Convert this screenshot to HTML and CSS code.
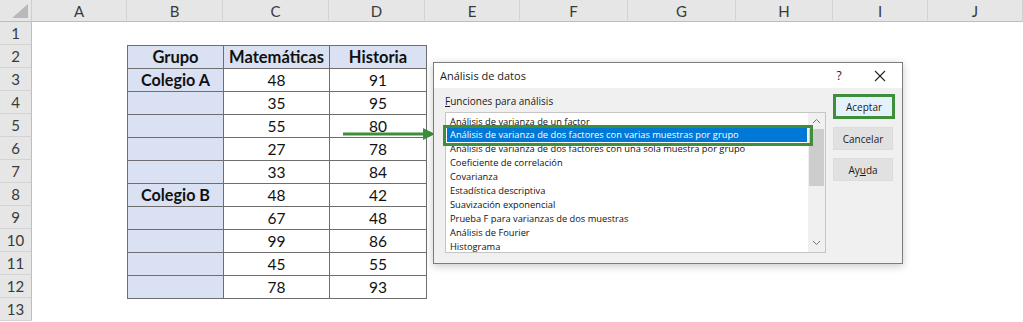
FILE: index.html
```html
<!DOCTYPE html>
<html lang="es">
<head>
<meta charset="utf-8">
<title>Análisis de datos</title>
<link rel="stylesheet" href="styles.css">
</head>
<body>
<div class="sheet">
  <div class="corner"><span class="tri"></span></div>
  <div class="colh">A</div><div class="colh">B</div><div class="colh">C</div><div class="colh">D</div><div class="colh">E</div><div class="colh">F</div><div class="colh">G</div><div class="colh">H</div><div class="colh">I</div><div class="colh">J</div>

  <div class="rowh r1">1</div><div class="rowh r2">2</div><div class="rowh r3">3</div><div class="rowh r4">4</div><div class="rowh r5">5</div><div class="rowh r6">6</div><div class="rowh r7">7</div><div class="rowh r8">8</div><div class="rowh r9">9</div><div class="rowh r10">10</div><div class="rowh r11">11</div><div class="rowh r12">12</div><div class="rowh r13">13</div>

  <table class="data">
    <colgroup><col class="cb"><col class="cc"><col class="cd"></colgroup>
    <tr class="head"><td>Grupo</td><td>Matemáticas</td><td>Historia</td></tr>
    <tr><td class="grp">Colegio A</td><td>48</td><td>91</td></tr>
    <tr><td class="grp"></td><td>35</td><td>95</td></tr>
    <tr><td class="grp"></td><td>55</td><td>80</td></tr>
    <tr><td class="grp"></td><td>27</td><td>78</td></tr>
    <tr><td class="grp"></td><td>33</td><td>84</td></tr>
    <tr><td class="grp">Colegio B</td><td>48</td><td>42</td></tr>
    <tr><td class="grp"></td><td>67</td><td>48</td></tr>
    <tr><td class="grp"></td><td>99</td><td>86</td></tr>
    <tr><td class="grp"></td><td>45</td><td>55</td></tr>
    <tr><td class="grp"></td><td>78</td><td>93</td></tr>
  </table>
</div>

<svg class="arrow" width="100" height="16" viewBox="0 0 100 16">
  <line x1="0" y1="8" x2="82" y2="8" stroke="#3f8f3a" stroke-width="2.8"/>
  <polygon points="80,2 92,8 80,14" fill="#3f8f3a"/>
</svg>

<div class="dialog">
  <div class="titlebar">
    <span class="title">Análisis de datos</span>
    <span class="help">?</span>
    <svg class="close" width="12" height="12" viewBox="0 0 12 12"><path d="M1 1 L11 11 M11 1 L1 11" stroke="#222" stroke-width="1.1" fill="none"/></svg>
  </div>
  <div class="body">
    <div class="left">
      <div class="label"><u>F</u>unciones para análisis</div>
      <div class="listbox">
        <ul class="items">
          <li>Análisis de varianza de un factor</li>
          <li class="sel">Análisis de varianza de dos factores con varias muestras por grupo</li>
          <li>Análisis de varianza de dos factores con una sola muestra por grupo</li>
          <li>Coeficiente de correlación</li>
          <li>Covarianza</li>
          <li>Estadística descriptiva</li>
          <li>Suavización exponencial</li>
          <li>Prueba F para varianzas de dos muestras</li>
          <li>Análisis de Fourier</li>
          <li>Histograma</li>
        </ul>
        <div class="scroll">
          <svg class="up" width="9" height="6" viewBox="0 0 9 6"><path d="M1 5 L4.5 1.5 L8 5" stroke="#777" stroke-width="1" fill="none"/></svg>
          <div class="thumb"></div>
          <svg class="down" width="9" height="6" viewBox="0 0 9 6"><path d="M1 1 L4.5 4.5 L8 1" stroke="#777" stroke-width="1" fill="none"/></svg>
        </div>
      </div>
    </div>
    <div class="buttons">
      <div class="btn ok">Aceptar</div>
      <div class="btn">Cancelar</div>
      <div class="btn">Ay<u>u</u>da</div>
    </div>
  </div>
  <div class="selbox"></div>
</div>
</body>
</html>
```
FILE: styles.css
```css
html, body { margin: 0; padding: 0; background: #fff; }
body { width: 1023px; height: 322px; overflow: hidden; position: relative; }

.sheet {
  display: grid;
  grid-template-columns: 32px 95px 96px 106px 96px 95px 108px 108px 97px 95px 95px;
  grid-template-rows: 22px repeat(13, 23px);
  font-family: "Lato", "Open Sans", sans-serif;
}
.corner {
  background: #e6e6e6;
  border-right: 1px solid #cfcfcf;
  border-bottom: 1px solid #bdbdbd;
  position: relative;
}
.tri {
  position: absolute; right: 3px; bottom: 3px;
  width: 0; height: 0;
  border-left: 16px solid transparent;
  border-bottom: 14px solid #b9b9b9;
}
.colh {
  background: #e6e6e6;
  border-right: 1px solid #d3d3d3;
  border-bottom: 1px solid #bdbdbd;
  display: flex; align-items: center; justify-content: center;
  font-size: 15px; color: #3a3a3a;
  padding-top: 1px;
}
.rowh {
  grid-column: 1;
  background: #e6e6e6;
  border-right: 1px solid #bdbdbd;
  border-bottom: 1px solid #d3d3d3;
  display: flex; align-items: center; justify-content: center;
  font-size: 15px; color: #3a3a3a;
}
.r1 { grid-row: 2; } .r2 { grid-row: 3; } .r3 { grid-row: 4; } .r4 { grid-row: 5; }
.r5 { grid-row: 6; } .r6 { grid-row: 7; } .r7 { grid-row: 8; } .r8 { grid-row: 9; }
.r9 { grid-row: 10; } .r10 { grid-row: 11; } .r11 { grid-row: 12; } .r12 { grid-row: 13; }
.r13 { grid-row: 14; }

.data {
  grid-column: 3 / 6;
  grid-row: 3 / 14;
  border-collapse: collapse;
  table-layout: fixed;
  width: 299px;
  align-self: start;
  font-size: 15.5px;
  color: #111;
}
.cb { width: 96px; } .cc { width: 106px; } .cd { width: 97px; }
.data td {
  border: 1px solid #6e6e6e;
  height: 22px;
  padding: 0;
  text-align: center;
  line-height: 20px;
  white-space: nowrap;
}
.data .head td { background: #d9e1f2; font-weight: 700; font-size: 16.5px; }
.data td.grp { background: #d9e1f2; font-weight: 700; font-size: 16.2px; }

.arrow { position: absolute; left: 343px; top: 126px; }

.dialog {
  position: absolute;
  left: 433px; top: 62px;
  width: 468px; height: 200px;
  border: 1px solid #7c7c7c;
  box-shadow: 0 2px 8px rgba(0,0,0,0.22);
  background: #f0f0f0;
  font-family: "Open Sans", "Noto Sans", sans-serif;
  font-size: 10px;
  color: #1a1a1a;
}
.titlebar {
  height: 25px;
  background: #fff;
  display: flex; align-items: center;
  padding-left: 6px;
}
.title { font-size: 11px; flex: 1; }
.help { font-size: 12px; width: 14px; margin-right: 28px; text-align: center; }
.close { margin-right: 16px; }

.body {
  display: flex;
  padding: 6px 0 0 11px;
  gap: 7px;
}
.left { display: flex; flex-direction: column; }
.label { height: 14px; line-height: 14px; margin-bottom: 4px; }
.listbox {
  width: 379px; height: 139px;
  border: 1px solid #c5c5c5;
  background: #fff;
  display: flex;
  overflow: hidden;
}
.items {
  list-style: none; margin: 0; padding: 1.5px 1px 0;
  flex: 1;
  font-size: 9.3px;
  color: #111;
}
.items li {
  height: 13.9px; line-height: 14.4px;
  padding-left: 3px;
  white-space: nowrap;
}
.items li.sel { background: #0078d7; color: #fff; }
.scroll {
  width: 17px;
  background: #f0f0f0;
  position: relative;
}
.scroll .up { position: absolute; left: 4px; top: 5px; }
.scroll .down { position: absolute; left: 4px; bottom: 6px; }
.thumb {
  position: absolute; left: 1px; right: 1px;
  top: 16px; height: 57px;
  background: #cdcdcd;
}

.buttons { display: flex; flex-direction: column; gap: 8px; }
.btn {
  width: 58px; height: 21px;
  background: #e1e1e1;
  border: 1px solid #dcdcdc;
  display: flex; align-items: center; justify-content: center;
  font-size: 10px;
}
.btn.ok {
  width: 56px; height: 19px;
  background: #e5f1fb;
  border: 3px solid #3f8f3a;
}
.selbox {
  position: absolute;
  left: 9px; top: 62px;
  width: 364px; height: 15px;
  border: 3px solid #3f8f3a;
}
```
